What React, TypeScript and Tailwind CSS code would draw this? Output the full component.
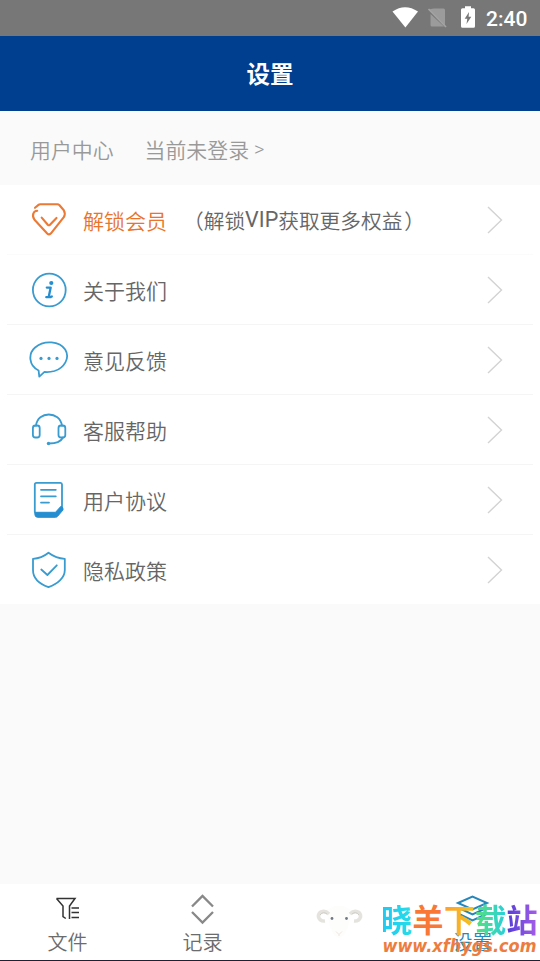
import type { ReactNode } from "react";

const blue = "#3a9bd0";

function Icon({ children, color = blue }: { children: ReactNode; color?: string }) {
  return (
    <svg
      className="h-10 w-10 shrink-0"
      viewBox="0 0 40 40"
      fill="none"
      stroke={color}
      strokeWidth="1.8"
      strokeLinecap="round"
      strokeLinejoin="round"
    >
      {children}
    </svg>
  );
}

const rows: { label: string; note?: boolean; icon: ReactNode }[] = [
  {
    label: "解锁会员",
    note: true,
    icon: (
      <Icon color="#ea7a35">
        <path
          strokeWidth="2.100"
          d="M6 7.800 9.500 4.900Q10.200 4.300 11.200 4.300H28.500Q29.500 4.300 30.300 5L34.800 10.200Q36.800 13.500 34.800 17.200L22 33.300Q20.200 35.400 18.200 33.500L5.300 19.500Q3.200 16.500 4.400 13.500Q5.300 10.900 8.200 10.700"
        />
        <path strokeWidth="2.100" d="M12.700 17.600 18.800 24.700Q19.900 25.900 21 24.700L27.500 17.900" />
      </Icon>
    ),
  },
  {
    label: "关于我们",
    icon: (
      <Icon>
        <circle cx="20.300" cy="20" r="16.400" />
        <path d="M17.800 17.600H21.700L19.900 26Q19.700 27.400 22.800 26.500M17.300 27.200H22" stroke="#258ed0" strokeWidth="2.300" />
        <circle cx="22.300" cy="13" r="2.100" fill="#258ed0" stroke="none" />
      </Icon>
    ),
  },
  {
    label: "意见反馈",
    icon: (
      <Icon>
        <path d="M9.600 30.500C-.5 25.700-.9 13.500 6.100 7.500C15.500-.6 30.600 1.300 36.200 9.500C41.500 18 35 28 25.500 31Q20.300 32.400 15.500 31.900L10.300 36.600Z" />
        <g fill="#3a9bd0" stroke="none">
          <circle cx="12" cy="18.400" r="1.600" />
          <circle cx="20" cy="18.400" r="1.600" />
          <circle cx="28" cy="18.400" r="1.600" />
        </g>
      </Icon>
    ),
  },
  {
    label: "客服帮助",
    icon: (
      <Icon>
        <path d="M7 15.800C8.500 .7 31 .7 33 15.800" />
        <rect x="3.900" y="15.500" width="6.800" height="12" rx="2.500" />
        <rect x="29.500" y="15.500" width="6.800" height="12" rx="2.500" />
        <path d="M34 27.500Q31 33.500 20 33.500" />
        <circle cx="19.500" cy="33.500" r="1.700" fill="#3a9bd0" stroke="none" />
      </Icon>
    ),
  },
  {
    label: "用户协议",
    icon: (
      <Icon>
        <path d="M5.800 32V4.500Q5.800 2.900 7.500 2.900H31.500Q33 2.900 33 4.500V29" />
        <path d="M6.400 32.300H26.500L32 26.200Q34.700 27.500 34 30L28.600 36.300Q27.900 37.300 26.500 37.300H8.500Q5.600 37.200 5.800 33Z" fill="#258ed0" stroke="#258ed0" strokeWidth="1" />
        <path d="M12 9.800H26.800M12 16.300H26.800M12 22.600H20" />
      </Icon>
    ),
  },
  {
    label: "隐私政策",
    icon: (
      <Icon>
        <path d="M19.500 2.800Q27 8.500 35.800 8.800V20C35.800 27.500 29 33.800 19.500 37.200C10 33.800 4 27.500 4 20V8.800Q12.500 8.500 19.500 2.800Z" />
        <path d="M12.300 19.500 18.400 25 27.800 15.300" />
      </Icon>
    ),
  },
];

function StatusBar() {
  return (
    <div className="flex h-9 items-center justify-end bg-[#777777] pr-3 text-white">
      <svg className="h-9 w-[88px]" viewBox="390 0 88 36">
        <path d="M392.500 11.500Q405 2.800 418 11.500L405.400 27.500Z" fill="#fff" />
        <path d="M433.500 8.500H443.500Q445 8.500 445 10V25.500L429 9.500ZM430.500 14V25Q430.500 26.500 432 26.500H444Z" fill="#9b9b9b" />
        <path d="M428.500 9 446 27" stroke="#a3a3a3" strokeWidth="1.700" />
        <path d="M465 6.200H471V8.200H473.500Q475 8.200 475 9.800V26.300Q475 27.800 473.500 27.800H462.500Q461 27.800 461 26.300V9.800Q461 8.200 462.500 8.200H465Z" fill="#fff" />
        <path d="M469 12 464.700 18.800H467.300L466.500 24 471.300 16.800H468.600Z" fill="#777" />
      </svg>
      <span className="ml-2 w-[42px] pt-0.5 font-[Roboto] text-[21px] leading-none font-medium whitespace-nowrap">2:40</span>
    </div>
  );
}

function Tab({ label, children, active = false }: { label: string; children: ReactNode; active?: boolean }) {
  return (
    <div className={`flex w-[135px] flex-col items-center ${active ? "text-[#2787bb]" : "text-[#6c6c6c]"}`}>
      <svg className="mt-2 h-[34px] w-9" viewBox="0 0 36 34" fill="none" stroke="currentColor">
        {children}
      </svg>
      <span className="mt-[2px] text-[20px] leading-7 font-[350]">{label}</span>
    </div>
  );
}

function Sheep() {
  return (
    <svg className="absolute top-[15px] left-[310px] h-[44px] w-[58px]" viewBox="310 900 58 44" fill="none">
      <path d="M326 912Q339 901 352 912L349 923Q346 937 339 939Q332 937 329 923Z" fill="#fdfdfc" />
      <path d="M329 915C324 910 318 913 318.500 918Q320 922.500 325 922" stroke="#e4e3de" strokeWidth="3.600" />
      <path d="M350 915C355 910 361 913 360.500 918Q359 922.500 354 922" stroke="#e4e3de" strokeWidth="3.600" />
      <path d="M320 916Q323 912 327 915M359 916Q356 912 352 915" stroke="#cdccc5" strokeWidth="1" />
      <circle cx="332" cy="919.500" r="1.400" fill="#707985" />
      <circle cx="346.500" cy="919.500" r="1.400" fill="#707985" />
      <path d="M336 932.500 339 935.500 342 932.500M339 935.500V937" stroke="#ece6e1" />
    </svg>
  );
}

function Watermark() {
  return (
    <div className="absolute top-[16px] left-[381px] w-[159px] font-bold">
      <div className="flex text-[31.300px] leading-[38px]">
        <span className="bg-linear-to-r from-[#20c8f2] to-[#28dce7] bg-clip-text text-transparent">晓</span>
        <span className="text-[#f97835]">羊</span>
        <span className="bg-linear-to-r from-[#ff9f2c] to-[#efc51f] bg-clip-text text-transparent">下</span>
        <span className="bg-linear-to-r from-[#58df73] to-[#25cfdb] bg-clip-text text-transparent">载</span>
        <span className="bg-linear-to-r from-[#533bd7] to-[#a85de9] bg-clip-text text-transparent">站</span>
      </div>
      <svg className="absolute top-[34px] left-0 h-[26px] w-[159px]" viewBox="0 0 159 26">
        <text x="1.500" y="17.500" textLength="154" lengthAdjust="spacingAndGlyphs" fill="#ed7d3f" fontFamily="DejaVu Sans, sans-serif" fontSize="18" fontStyle="italic" fontWeight="700">
          www.xfhygs.com
        </text>
      </svg>
    </div>
  );
}

export default function App() {
  return (
    <main className="flex h-[961px] w-[540px] flex-col overflow-hidden bg-[#fafafa] font-['Noto_Sans_CJK_SC',sans-serif]">
      <StatusBar />
      <header className="flex h-[75px] items-center justify-center bg-[#003e8f] pt-px text-[23.500px] font-bold text-white">设置</header>
      <section className="flex h-[74px] items-center gap-[31px] pt-[3px] pl-[30px] text-[20.900px] font-[350] text-[#999999]">
        <span>用户中心</span>
        <span className="flex items-center gap-[5px]">
          <span>当前未登录</span> <span className="font-[Roboto] text-[20px]">&gt;</span>
        </span>
      </section>
      <section className="flex h-[419px] flex-col bg-white">
        {rows.map(({ label, note, icon }, index) => (
          <div
            key={label}
            className="mx-[7px] flex h-[70px] shrink-0 items-center border-b border-[#f5f5f5] pr-[30px] pl-[22px] text-[21px] font-[350] text-[#666666] first:border-[#fbfbfb] last:h-[69px] last:border-b-0"
          >
            {icon}
            <span className={`ml-[14px] pt-0.5 ${index === 0 ? "text-[#ea742a]" : ""}`}>{label}</span>
            {note && (
              <span className="ml-[16px] flex items-center pt-0.5 text-[20.700px] whitespace-nowrap">
                <span>（</span>
                <span>解锁</span>
                <span className="font-[Roboto] text-[21.500px] font-normal">VIP</span>
                <span>获取更多权益</span>
                <span className="ml-[2px]">）</span>
              </span>
            )}
            <svg className="ml-auto h-[30px] w-4" viewBox="0 0 16 30" fill="none" stroke="#d3d3d3" strokeWidth="1.400">
              <path d="M1 2 14.500 15 1 28" />
            </svg>
          </div>
        ))}
      </section>
      <nav className="relative mt-auto flex h-[77px] border-b border-[#202034] bg-white">
        <Tab label="文件">
          <g stroke="#333" strokeWidth="1.500">
            <path d="M6.500 6.500H25L19.500 14V27M6.500 6.500 13 14V24.500L15.800 26.500M21.500 16H29M21.500 20.500H29M21.500 25.500H29" />
          </g>
        </Tab>
        <Tab label="记录">
          <path d="M7 14.500 17.500 4 28 14.500M7 20 17.500 30.500 28 20" stroke="#888" strokeWidth="2.300" />
        </Tab>
        <div className="w-[135px]" />
        <Tab label="设置" active>
          <g strokeWidth="2">
            <path d="M3 11 17.500 4.700 32 11 17.500 17.500ZM4 16 17.500 22.300 31.500 16M4 22 17.500 28.500 31.500 22" />
          </g>
        </Tab>
        <Sheep />
        <Watermark />
      </nav>
    </main>
  );
}
